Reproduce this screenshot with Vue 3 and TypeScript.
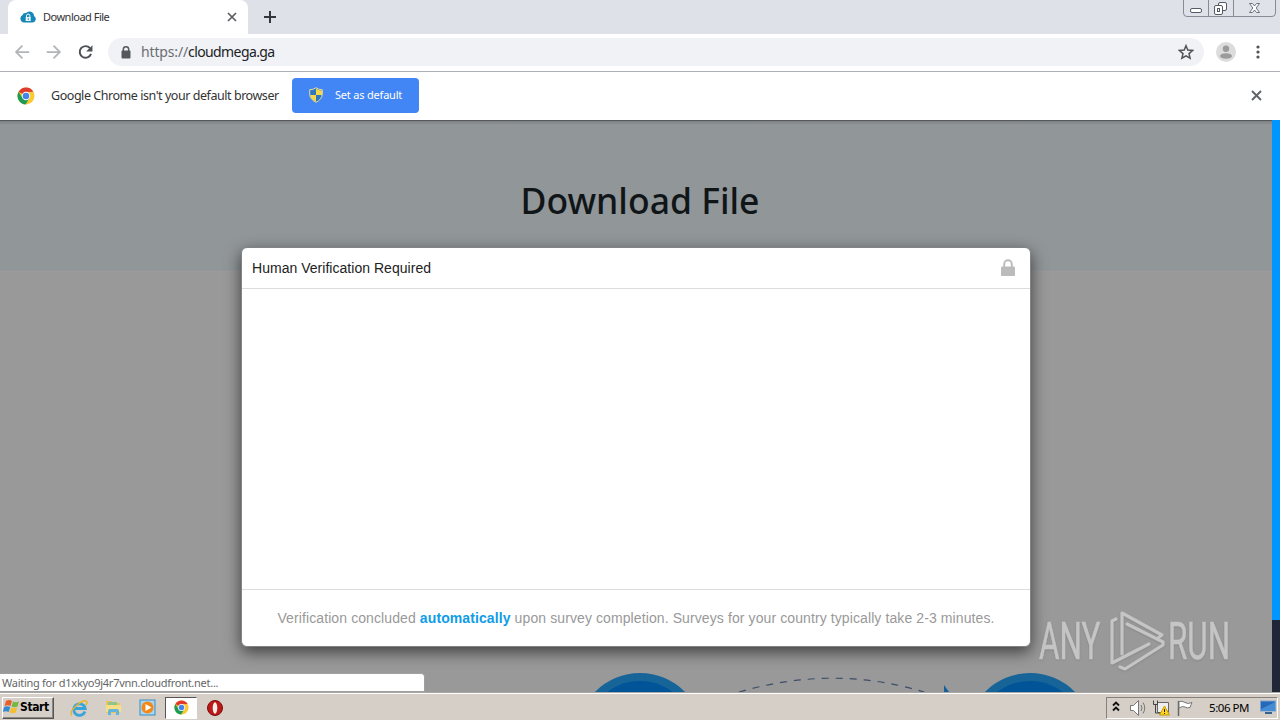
<script setup lang="ts">
const pageTitle = 'Download File'
const host = 'cloudmega.ga'
const clock = '5:06 PM'
const circles: number[] = [250, 640, 1030]
</script>

<template>
  <div class="screen">
    <header class="tabs">
      <div class="tab">
        <svg class="favicon" width="16" height="12" viewBox="0 0 16 12">
          <path d="M4 11.500A4 4 0 0 1 2.500 4 3 3 0 0 1 6 2a4.600 4.600 0 0 1 8 3 3.500 3.500 0 0 1-1 6.500z" fill="#1687b8" />
          <path d="M6.500 6V4.800a1.700 1.700 0 0 1 3.400 0V6" fill="none" stroke="#fff" stroke-width="1" />
          <path d="M5.700 6h5v4h-5z" fill="#e9f7fc" /><path d="M7.800 7.200h1v1.800h-1z" fill="#1687b8" />
        </svg>
        <span class="tab-title">{{ pageTitle }}</span>
        <svg class="tab-close" width="10" height="10" viewBox="0 0 10 10"><path d="M1 1l8 8M9 1L1 9" stroke="#5b5e62" stroke-width="1.700" /></svg>
      </div>
      <svg class="plus" width="12" height="12" viewBox="0 0 12 12"><path d="M6 0v12M0 6h12" stroke="#33363a" stroke-width="2" /></svg>
      <svg class="window-buttons" width="93" height="17" viewBox="0 0 93 17">
        <path d="M.5 0v13q0 3.500 3.500 3.500h85q3.500 0 3.500-3.500V0M25.500 0v16M50.500 0v16" fill="#dfe2e8" stroke="#878b98" />
        <rect x="7.500" y="8.500" width="11" height="4" rx="1.500" fill="#fff" stroke="#555a66" />
        <rect x="35.500" y="2.500" width="8" height="8" rx="1.500" fill="#fff" stroke="#555a66" />
        <rect x="31.500" y="5.500" width="8" height="9" rx="1.500" fill="#fff" stroke="#555a66" />
        <rect x="34.500" y="8.500" width="2" height="3" fill="#fff" stroke="#555a66" />
        <path d="M66.500 3.500h3l2 2.500 2-2.500h3l-3.300 4.500 3.300 4.500h-3l-2-2.500-2 2.500h-3l3.300-4.500z" fill="#fff" stroke="#6c707c" />
      </svg>
    </header>

    <div class="toolbar">
      <svg class="nav" width="110" height="37" viewBox="0 0 110 37" fill="none">
        <path d="M29 18H16M22 11.500L15.500 18l6.500 6.500M47 18h13M54 11.500l6.500 6.500-6.500 6.500" stroke="#b2b4b7" stroke-width="1.800" />
        <path d="M91.500 14A6 6 0 1 0 92.600 20" stroke="#4d5054" stroke-width="2" />
        <path d="M94 11v6.500h-6.500z" fill="#4d5054" />
      </svg>
      <div class="omnibox">
        <svg class="url-lock" width="10" height="13" viewBox="0 0 10 13"><path d="M2.300 5V3.500a2.700 2.700 0 0 1 5.400 0V5" fill="none" stroke="#54575b" stroke-width="1.500" /><rect x=".5" y="4.500" width="9" height="8" rx="1" fill="#54575b" /></svg>
        <span class="url"><span class="scheme">https://</span>{{ host }}</span>
        <svg class="star" width="16" height="16" viewBox="0 0 16 16"><path d="M8 1.700l1.800 4.400 4.800.4-3.600 3.100 1.100 4.600L8 11.800l-4.100 2.400L5 9.600 1.400 6.500l4.800-.4z" fill="none" stroke="#505357" stroke-width="1.500" /></svg>
      </div>
      <svg class="avatar" width="20" height="20" viewBox="0 0 20 20"><circle cx="10" cy="10" r="10" fill="#dcdcdc" /><circle cx="10" cy="6.700" r="3.200" fill="#9b9b9b" /><ellipse cx="10" cy="14" rx="6" ry="2.800" fill="#9b9b9b" /></svg>
      <svg class="dots" width="4" height="14" viewBox="0 0 4 14" fill="#505357"><circle cx="2" cy="2" r="1.600" /><circle cx="2" cy="7" r="1.600" /><circle cx="2" cy="12" r="1.600" /></svg>
    </div>

    <div class="infobar">
      <svg class="chrome-logo" width="18" height="18" viewBox="0 0 18 18">
        <circle cx="9" cy="9" r="8.500" fill="#fbc934" />
        <path d="M9 9L1.600 4.800A8.500 8.500 0 0 1 16.400 4.800L9 5z" fill="#df3a2e" /><path d="M1.600 4.800A8.500 8.500 0 0 0 8.600 17.500L12.400 11 9 9 5.500 11z" fill="#1b9b55" />
        <circle cx="9" cy="9" r="4.200" fill="#fff" /><circle cx="9" cy="9" r="3.300" fill="#4285e8" />
      </svg>
      <span class="info-text">Google Chrome isn't your default browser</span>
      <button class="default-button">
        <svg width="14" height="16" viewBox="0 0 14 16">
          <path d="M7 .7Q4 3 .7 2.700V7Q1 12.500 7 15.300 13 12.500 13.300 7V2.700Q10 3 7 .7z" fill="#2f78bd" />
          <path d="M7 1.500Q10 4 13 3.500V8H7zM7 8H1Q2 12.500 7 14.800z" fill="#f7d747" />
          <path d="M7 .7Q4 3 .7 2.700V7Q1 12.500 7 15.300 13 12.500 13.300 7V2.700Q10 3 7 .7z" fill="none" stroke="#e3dc9c" />
        </svg>
        <span>Set as default</span>
      </button>
      <svg class="info-close" width="11" height="11" viewBox="0 0 11 11"><path d="M1 1l9 9M10 1l-9 9" stroke="#606367" stroke-width="1.900" /></svg>
    </div>

    <main class="viewport">
      <section class="hero"><h1>{{ pageTitle }}</h1></section>
      <div class="page-scroll"><div class="scroll-blue"></div></div>
      <svg class="art" width="1272" height="572" viewBox="0 120 1272 572">
        <g v-for="x in circles" :key="x">
          <circle :cx="x" cy="736" r="63" fill="#176499" />
          <circle :cx="x" cy="736" r="55" fill="#005497" />
        </g>
        <path d="M739 692Q836 664 927 693" fill="none" stroke="#3c4e67" stroke-width="1.200" stroke-dasharray="7 7" />
        <path d="M944 685l5 7h-5z" fill="#175f99" />
      </svg>

      <div class="modal">
        <div class="modal-head">
          <span class="modal-title">Human Verification Required</span>
          <svg width="14" height="17" viewBox="0 0 14 17"><path d="M3.200 8V5a3.800 3.800 0 0 1 7.600 0v3" fill="none" stroke="#bbb" stroke-width="1.900" /><rect y="7.500" width="14" height="9.500" rx="1" fill="#bbb" /></svg>
        </div>
        <div class="modal-body"></div>
        <div class="modal-foot"><p>Verification concluded <b>automatically</b> upon survey completion. Surveys for your country typically take 2-3 minutes.</p></div>
      </div>

      <svg class="watermark" width="220" height="80" viewBox="1035 600 220 80">
        <g fill="#d0d0d0" stroke="#d0d0d0" stroke-width=".6" font-family="Roboto, sans-serif" font-size="51.500">
          <text transform="translate(1039 659) scale(.61 1)">ANY</text>
          <text transform="translate(1168 659) scale(.61 1)">RUN</text>
        </g>
        <g fill="none" stroke="#d0d0d0" stroke-width="3.200" stroke-linejoin="round" stroke-linecap="round">
          <path d="M1116 619l-4 2v42l37-19" />
          <path d="M1122 654v-41l40 22-4 3" />
          <path d="M1120 667l5 2 38-24v-3l-36-18" />
        </g>
      </svg>
      <div class="status">Waiting for d1xkyo9j4r7vnn.cloudfront.net...</div>
    </main>

    <footer class="taskbar">
      <div class="start">
        <svg width="17" height="16" viewBox="0 0 17 16"><path d="M3 2q3-2 6 0L7.500 7q-3-1.500-6 0z" fill="#e95d2c" /><path d="M10 2.500q3 1.500 6 0l-1.500 5q-3 1.500-6 0z" fill="#75b843" /><path d="M1.200 8q3-1.500 6 0l-1.500 5q-3-1.500-6 0z" fill="#328bd0" /><path d="M8.200 8.500q3 1.500 6 0l-1.500 5q-3 1.500-6 0z" fill="#f5bd2b" /></svg>
        <b>Start</b>
      </div>
      <div class="launchers">
        <div class="launcher"><svg width="18" height="18" viewBox="0 0 18 18" fill="none"><path d="M15 12.500A5.800 5.800 0 1 1 15.200 9.500H5" stroke="#39a4da" stroke-width="2.800" /><path d="M2 16.500Q-1 13 6 7 15-1 17 3q.5 1-1 3" stroke="#e7b52b" stroke-width="1.400" /></svg></div>
        <div class="launcher"><svg width="17" height="17" viewBox="0 0 17 17"><path d="M1 4V2h6l1 2h7v10H1z" fill="#e8c45a" /><path d="M3 3h9v5H3z" fill="#8fc58b" /><path d="M1 6h15v7H1z" fill="#f7df88" /><path d="M3 16v-4q0-2 2-2h7q2 0 2 2v4h-3v-3H6v3z" fill="#63b5dc" /></svg></div>
        <div class="launcher"><svg width="17" height="17" viewBox="0 0 17 17"><rect x="1" y="1" width="15" height="15" fill="#a9d5ee" stroke="#398fc6" /><circle cx="8.500" cy="8.500" r="6" fill="#f48817" /><path d="M6.500 5l6 3.500-6 3.500z" fill="#fff" /></svg></div>
        <div class="launcher active"><svg width="15" height="15" viewBox="0 0 18 18"><circle cx="9" cy="9" r="8.500" fill="#fbc934" /><path d="M9 9L1.600 4.800A8.500 8.500 0 0 1 16.400 4.800L9 5z" fill="#df3a2e" /><path d="M1.600 4.800A8.500 8.500 0 0 0 8.600 17.500L12.400 11 9 9 5.500 11z" fill="#1b9b55" /><circle cx="9" cy="9" r="4.200" fill="#fff" /><circle cx="9" cy="9" r="3.300" fill="#4285e8" /></svg></div>
        <div class="launcher"><svg width="16" height="16" viewBox="0 0 16 16"><circle cx="8" cy="8" r="7.500" fill="#bd1717" stroke="#790d0d" /><ellipse cx="8" cy="8" rx="2.300" ry="5.700" fill="#f7efed" /></svg></div>
      </div>
      <div class="tray">
        <svg width="90" height="20" viewBox="0 0 90 20">
          <path d="M6 7.500l3-3 3 3M6 12.500l3-3 3 3" fill="none" stroke="#111" stroke-width="1.800" />
          <path d="M23.500 7.500h3l5-5v15l-5-5h-3z" fill="#fff" stroke="#777" />
          <path d="M34 7q2 3 0 6M36 4.500q3.500 5.500 0 11" fill="none" stroke="#777" />
          <path d="M50.500 4.500h11v10h-11z" fill="#eee" stroke="#666" /><path d="M46.500 2.500v4h4v-4M48.500 7v8h5" fill="none" stroke="#444" />
          <path d="M57.500 8l5 9h-10z" fill="#ffd51f" stroke="#c69b00" /><path d="M57.500 11v3M57.500 15v1" stroke="#222" />
          <path d="M71.500 3v15" stroke="#666" stroke-width="1.500" /><path d="M72 3.500q3-1 6 1t7 0q-1 2-2 5-3 1-5-.5t-6 1z" fill="#fff" stroke="#777" />
        </svg>
        <span class="clock">{{ clock }}</span>
        <svg class="desktop" width="16" height="15" viewBox="0 0 16 15"><rect x=".5" y="1" width="15" height="10" fill="#2468b7" stroke="#7aa4cf" /><path d="M1 9L15 2v9H1z" fill="#468cd2" /><path d="M5 12h7v2H5z" fill="#37628d" /></svg>
      </div>
    </footer>
  </div>
</template>

<style>
body { margin: 0; overflow: hidden; }
</style>

<style scoped>
* { box-sizing: border-box; }
svg { display: block; flex: none; }
.screen { width: 1280px; height: 720px; display: flex; flex-direction: column; overflow: hidden; font-family: "Noto Sans", sans-serif; white-space: nowrap; color: #333; }
.tabs { height: 34px; flex: none; display: flex; background: #dee1e8; padding-left: 8px; }
.tab { width: 240px; height: 34px; background: #fff; border-radius: 8px 8px 0 0; display: flex; align-items: center; padding: 0 11px 0 12px; }
.tab-title { margin-left: 7px; padding-bottom: 2px; font-size: 11px; letter-spacing: -.5px; }
.tab-close { margin-left: auto; }
.plus { margin: 11px 0 0 16px; }
.window-buttons { margin-left: auto; margin-right: 4px; }
.toolbar { height: 37px; flex: none; background: #fff; display: flex; align-items: center; padding-bottom: 1px; }
.nav { width: 108px; padding-left: 1px; }
.omnibox { width: 1096px; height: 28px; border-radius: 14px; background: #f0f2f5; display: flex; align-items: center; padding: 0 10px 0 13px; }
.url { margin-left: 10px; font-size: 14px; letter-spacing: -.6px; color: #202124; line-height: 28px; }
.scheme { color: #6a6e73; letter-spacing: -.15px; }
.star { margin-left: auto; }
.avatar { margin-left: 12px; }
.dots { margin-left: 20px; }
.infobar { height: 49px; flex: none; border-top: 1px solid #adb0b6; background: #fff; display: flex; align-items: center; padding: 0 0 1px 17px; }
.info-text { width: 241px; margin-left: 16px; font-size: 12.500px; letter-spacing: -.45px; }
.default-button { width: 127px; height: 35px; background: #4285f4; border: 0; border-radius: 4px; color: #fff; display: flex; align-items: center; padding: 0 17px 2px; gap: 12px; font: 11px "Noto Sans", sans-serif; letter-spacing: -.2px; white-space: nowrap; }
.info-close { margin-left: auto; margin-right: 18px; }
.viewport { position: relative; height: 572px; flex: none; overflow: hidden; background: #999; }
.hero { width: 1272px; height: 150px; background: linear-gradient(#55585b 0, #55585b 1px, #7c8083 1px, #919699 5px, #919699); border-bottom: 1px solid #8b949d; display: flex; justify-content: center; }
h1 { margin: 55px 0 0 8px; height: 50px; font: 500 35.500px/50px "Noto Sans", sans-serif; color: #101518; }
.page-scroll { position: absolute; top: 0; right: 0; width: 8px; height: 100%; background: #202638; }
.scroll-blue { height: 500px; background: #0096ff; }
.art { position: absolute; top: 0; left: 0; }
.modal { position: absolute; left: 241px; top: 127px; width: 790px; height: 400px; background: #fff; border: 1px solid #818487; border-radius: 6px; box-shadow: 0 5px 16px #0009; display: flex; flex-direction: column; font-family: "Liberation Sans", Arial, sans-serif; }
.modal-head { height: 41px; flex: none; border-bottom: 1px solid #ddd; display: flex; align-items: center; justify-content: space-between; padding: 0 15px 1px 10px; }
.modal-title { font-size: 14px; letter-spacing: .03px; color: #222; padding-top: 1px; }
.modal-body { flex: 1; }
.modal-foot { height: 57px; border-top: 1px solid #ddd; display: flex; justify-content: center; align-items: center; color: #999; font-size: 14px; letter-spacing: .1px; }
.modal-foot p { margin: 0; }
.modal-foot b { color: #109ce8; }
.watermark { position: absolute; left: 1035px; top: 480px; opacity: .8; filter: drop-shadow(0 1px 1px #6666); }
.status { position: absolute; left: 0; bottom: 0; width: 425px; height: 19px; background: #fff; border: 1px solid #a0a0a0; border-left: 0; border-radius: 0 4px 0 0; padding-left: 2px; font-size: 11px; line-height: 18px; letter-spacing: -.27px; color: #666; }
.taskbar { height: 28px; flex: none; background: #d5cfc7; border-top: 1px solid #aaa7a2; box-shadow: inset 0 1px #fff; display: flex; align-items: center; padding: 3px 2px 1px; }
.start { width: 52px; height: 22px; border: 1px solid; border-color: #fff #555 #555 #fff; box-shadow: inset -1px -1px #8b8782; display: flex; align-items: center; color: #000; font: 12px "DejaVu Sans Condensed", "DejaVu Sans", sans-serif; letter-spacing: -.4px; padding-bottom: 1px; }
.launchers { display: flex; margin-left: 9px; gap: 2px; }
.launcher { width: 32px; height: 22px; display: flex; align-items: center; justify-content: center; }
.active { background: #fff; border: 1px solid; border-color: #555 #fff #fff #555; }
.tray { width: 172px; height: 22px; margin-left: auto; border: 1px solid; border-color: #858079 #fff #fff #858079; display: flex; align-items: center; }
.clock { margin-left: 12px; padding-bottom: 1px; font-size: 11.500px; color: #000; letter-spacing: -.45px; }
.desktop { margin-left: auto; margin-right: 1px; }
</style>
